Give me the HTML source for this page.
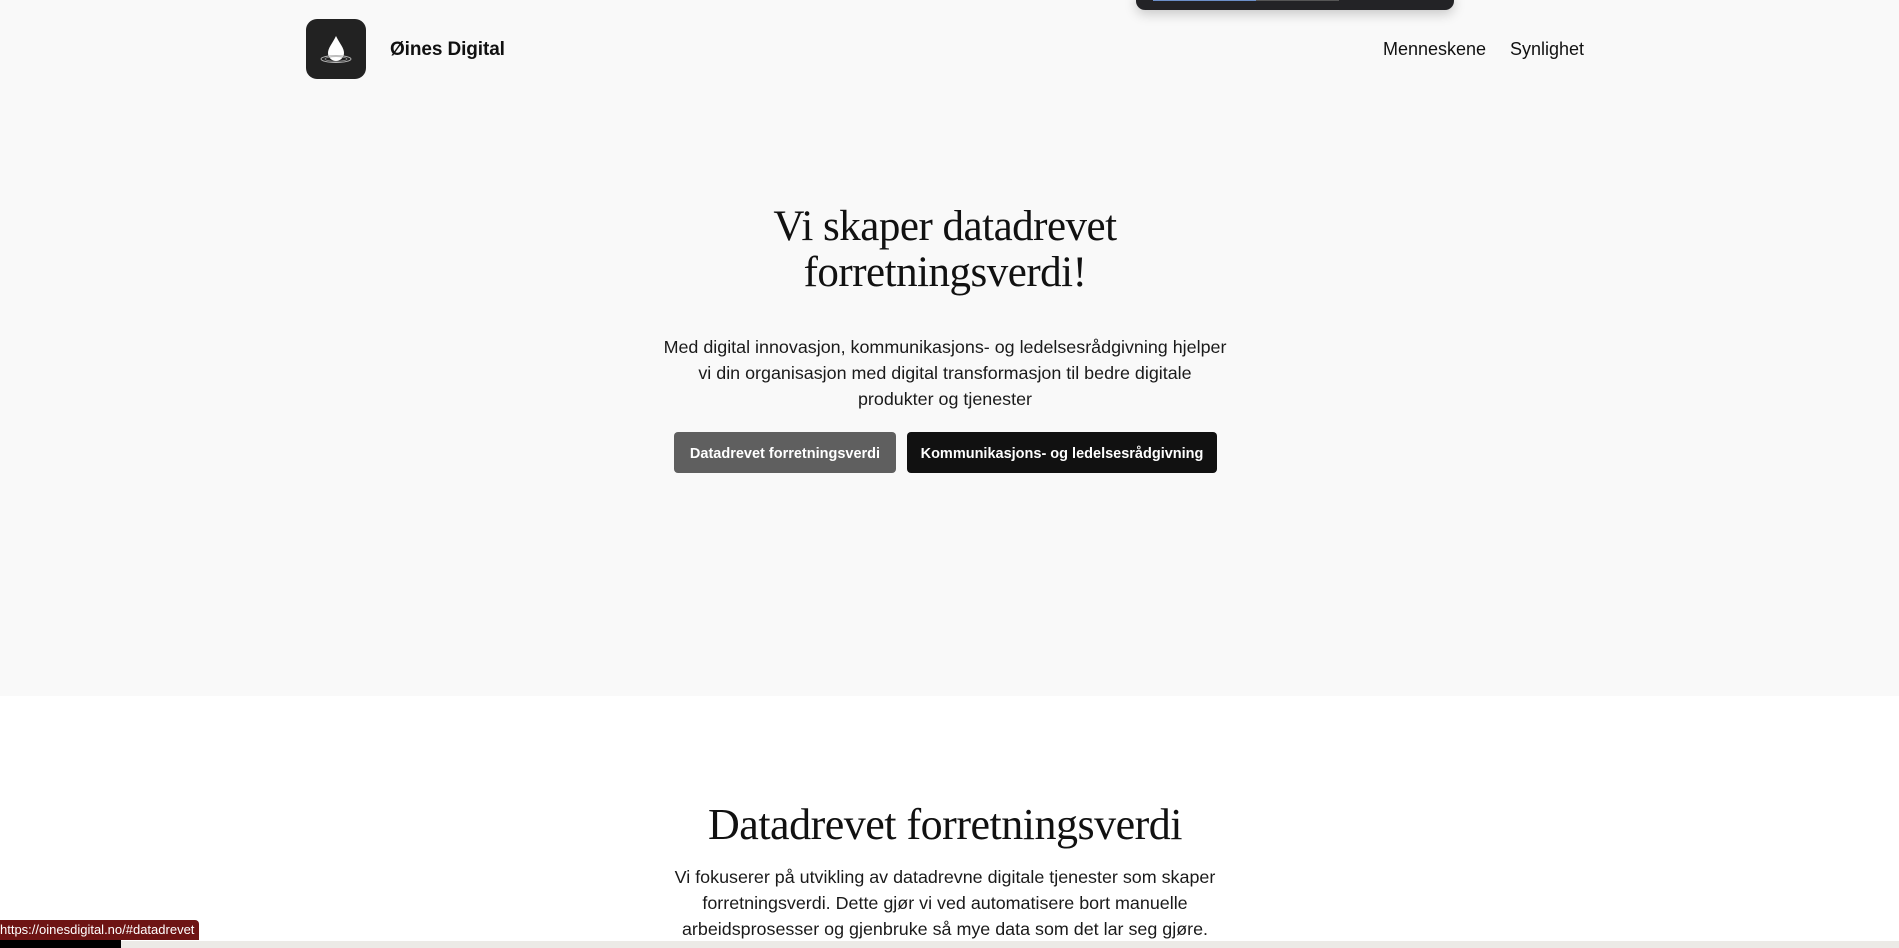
<!DOCTYPE html>
<html><head><meta charset="utf-8"><style>
*{margin:0;padding:0;box-sizing:border-box}
body{width:1899px;height:948px;overflow:hidden;background:#fff;font-family:"Liberation Sans",sans-serif;color:#111;position:relative}
.hero{position:absolute;left:0;top:0;width:1899px;height:696px;background:#f9f9f9}
.abs{position:absolute}
.logo{left:306px;top:19px;width:60px;height:60px;background:#222;border-radius:11px}
.brand{left:390px;top:39px;font-size:19px;font-weight:bold;letter-spacing:-0.1px}
.nav{top:39px;font-size:18px}
.popup{left:1136px;top:-10px;width:318px;height:20px;background:#232326;border-radius:9px;box-shadow:0 4px 12px rgba(0,0,0,.2)}
h1,h2{font-family:"Liberation Serif",serif;font-weight:normal;text-align:center;position:absolute;left:0;width:1890px;letter-spacing:-0.5px}
h1{top:204px;font-size:43px;line-height:46px}
h2{top:800px;font-size:44px;line-height:50px}
p{position:absolute;text-align:center;font-size:17.9px;line-height:26px;color:#1a1a1a;white-space:nowrap}
.btn{position:absolute;top:432px;height:41px;border-radius:4px;color:#fff;font-weight:bold;font-size:14.5px;line-height:44px;text-align:center;white-space:nowrap}
</style></head><body>
<div class="hero"></div>
<div class="abs logo"><svg width="60" height="60" viewBox="0 0 60 60"><path d="M30 17 C26 25 22 29 22 34 a8 8 0 0 0 16 0 C38 29 34 25 30 17Z" fill="#fff"/><ellipse cx="30" cy="40" rx="15" ry="3.5" fill="none" stroke="#bbb" stroke-width="0.9"/><ellipse cx="30" cy="40" rx="11" ry="2.3" fill="none" stroke="#999" stroke-width="0.7"/></svg></div>
<div class="abs brand">Øines Digital</div>
<div class="abs nav" style="left:1383px">Menneskene</div>
<div class="abs nav" style="left:1510px">Synlighet</div>
<div class="abs popup"><div class="abs" style="left:17px;top:10px;width:103px;height:1px;background:#6c8fc8"></div><div class="abs" style="left:120px;top:10px;width:83px;height:1px;background:#555"></div></div>
<h1>Vi skaper datadrevet<br>forretningsverdi!</h1>
<p style="left:645px;width:600px;top:334px">Med digital innovasjon, kommunikasjons- og ledelsesrådgivning hjelper<br>vi din organisasjon med digital transformasjon til bedre digitale<br>produkter og tjenester</p>
<div class="btn" style="left:674px;width:222px;background:#5f5f5f">Datadrevet forretningsverdi</div>
<div class="btn" style="left:907px;width:310px;background:#111">Kommunikasjons- og ledelsesrådgivning</div>
<h2>Datadrevet forretningsverdi</h2>
<p style="left:645px;width:600px;top:864px">Vi fokuserer på utvikling av datadrevne digitale tjenester som skaper<br>forretningsverdi. Dette gjør vi ved automatisere bort manuelle<br>arbeidsprosesser og gjenbruke så mye data som det lar seg gjøre.</p>
<div class="abs" style="left:0;top:941px;width:1899px;height:7px;background:#eceae6"></div>
<div class="abs" style="left:0;top:940px;width:121px;height:8px;background:#000"></div>
<div class="abs" style="left:0;top:920px;width:199px;height:20px;background:#6e1414;border-radius:0 4px 0 0;color:#fff;font-size:13px;line-height:20px">https://oinesdigital.no/#datadrevet</div>
</body></html>
